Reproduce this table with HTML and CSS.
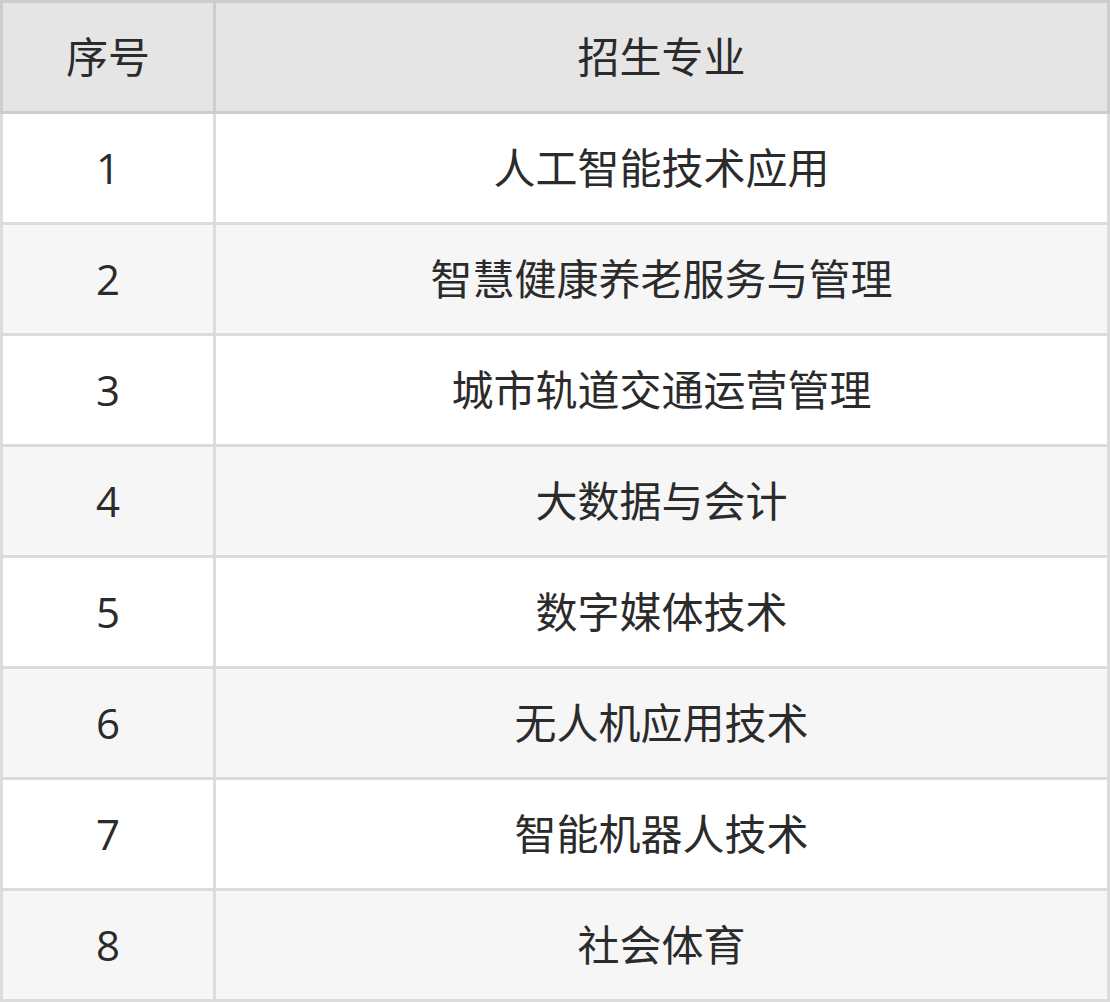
FILE: index.html
```html
<!DOCTYPE html>
<html lang="zh">
<head>
<meta charset="utf-8">
<link rel="stylesheet" href="styles.css">
</head>
<body>
<table class="majors">
  <thead>
    <tr><th class="col-no">序号</th><th class="col-name">招生专业</th></tr>
  </thead>
  <tbody>
    <tr><td>1</td><td>人工智能技术应用</td></tr>
    <tr><td>2</td><td>智慧健康养老服务与管理</td></tr>
    <tr><td>3</td><td>城市轨道交通运营管理</td></tr>
    <tr><td>4</td><td>大数据与会计</td></tr>
    <tr><td>5</td><td>数字媒体技术</td></tr>
    <tr><td>6</td><td>无人机应用技术</td></tr>
    <tr><td>7</td><td>智能机器人技术</td></tr>
    <tr><td>8</td><td>社会体育</td></tr>
  </tbody>
</table>
</body>
</html>
```
FILE: styles.css
```css
html, body {
  margin: 0;
  padding: 0;
  background: #ffffff;
}
.majors {
  border-collapse: collapse;
  width: 1110px;
  table-layout: fixed;
  font-family: "Open Sans", "Noto Sans CJK SC", sans-serif;
  font-size: 42px;
  color: #2b2b2b;
}
.majors th,
.majors td {
  border: 3px solid #dcdcdc;
  text-align: center;
  vertical-align: middle;
  padding: 0;
  height: 108px;
  font-weight: 400;
  line-height: 1;
}
.majors th {
  background: #e5e5e5;
  border-color: #cdcdcd;
}
.col-no {
  width: 210px;
}
.majors tbody tr:nth-child(odd) td {
  background: #ffffff;
}
.majors tbody tr:nth-child(even) td {
  background: #f6f6f6;
}
```
